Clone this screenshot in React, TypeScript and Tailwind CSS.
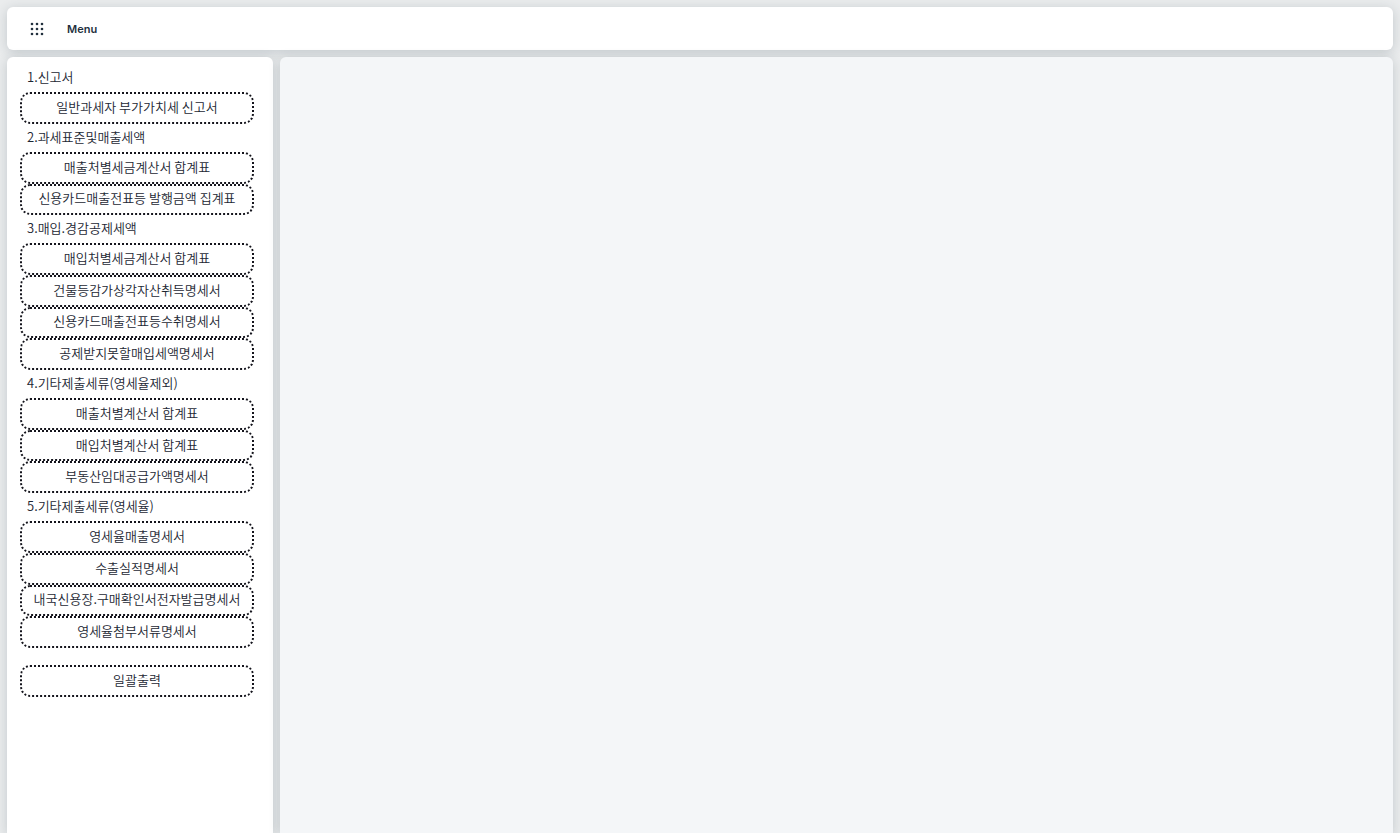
import { clsx } from "clsx";

interface MenuGroup {
  title: string;
  height: string;
  items: string[];
}

const GROUPS: MenuGroup[] = [
  { title: "1.신고서", height: "h-8", items: ["일반과세자 부가가치세 신고서"] },
  {
    title: "2.과세표준및매출세액",
    height: "h-[63px]",
    items: ["매출처별세금계산서 합계표", "신용카드매출전표등 발행금액 집계표"],
  },
  {
    title: "3.매입.경감공제세액",
    height: "h-[127px]",
    items: [
      "매입처별세금계산서 합계표",
      "건물등감가상각자산취득명세서",
      "신용카드매출전표등수취명세서",
      "공제받지못할매입세액명세서",
    ],
  },
  {
    title: "4.기타제출세류(영세율제외)",
    height: "h-[95px]",
    items: ["매출처별계산서 합계표", "매입처별계산서 합계표", "부동산임대공급가액명세서"],
  },
  {
    title: "5.기타제출세류(영세율)",
    height: "h-[127px]",
    items: [
      "영세율매출명세서",
      "수출실적명세서",
      "내국신용장.구매확인서전자발급명세서",
      "영세율첨부서류명세서",
    ],
  },
];

const PANEL = "rounded-md shadow-[0_2px_12px_rgba(40,60,75,0.2)]";

function MenuButton({ label }: { label: string }) {
  return (
    <button
      type="button"
      className="flex-1 w-full pb-0.5 rounded-[10px] border-2 border-dotted border-[#14141c] whitespace-nowrap text-center leading-5 cursor-pointer"
    >
      {label}
    </button>
  );
}

function GridIcon() {
  return (
    <svg viewBox="0 0 14 14" className="w-3.5 h-3.5" fill="currentColor" aria-hidden="true">
      {[2, 7, 12].map((y) => [2, 7, 12].map((x) => <circle key={`${x}-${y}`} cx={x} cy={y} r="1.3" />))}
    </svg>
  );
}

export default function App() {
  return (
    <div className="h-screen overflow-hidden flex flex-col gap-[7px] px-[7px] pt-[7px] bg-[#eaeced] text-[13px] font-[350] text-[#1c2733] font-['Noto_Sans_CJK_KR',sans-serif]">
      {/* Top bar */}
      <header className={clsx(PANEL, "h-[43px] shrink-0 flex items-center gap-[22px] px-[22px] bg-white")}>
        <button type="button" aria-label="Apps" className="p-[1px] w-4 text-[#22303e] cursor-pointer">
          <GridIcon />
        </button>
        <span className="text-[11px] leading-4 pt-px font-semibold text-[#232f3e] font-['Inter',sans-serif]">Menu</span>
      </header>

      <div className="flex-1 min-h-0 flex gap-[7px]">
        {/* Side menu */}
        <nav className={clsx(PANEL, "w-[266px] shrink-0 rounded-b-none bg-white px-[13px] pt-[7px]")}>
          {GROUPS.map((group) => (
            <section key={group.title}>
              <h2 className="h-7 pl-[7px] font-[350] leading-[26px]">{group.title}</h2>
              <div className={clsx("flex flex-col w-[234px]", group.height)}>
                {group.items.map((item) => (
                  <MenuButton key={item} label={item} />
                ))}
              </div>
            </section>
          ))}
          <div className="flex w-[234px] h-8 mt-[17px]">
            <MenuButton label="일괄출력" />
          </div>
        </nav>

        <main className={clsx(PANEL, "flex-1 rounded-b-none bg-[#f4f6f8]")} />
      </div>
    </div>
  );
}
